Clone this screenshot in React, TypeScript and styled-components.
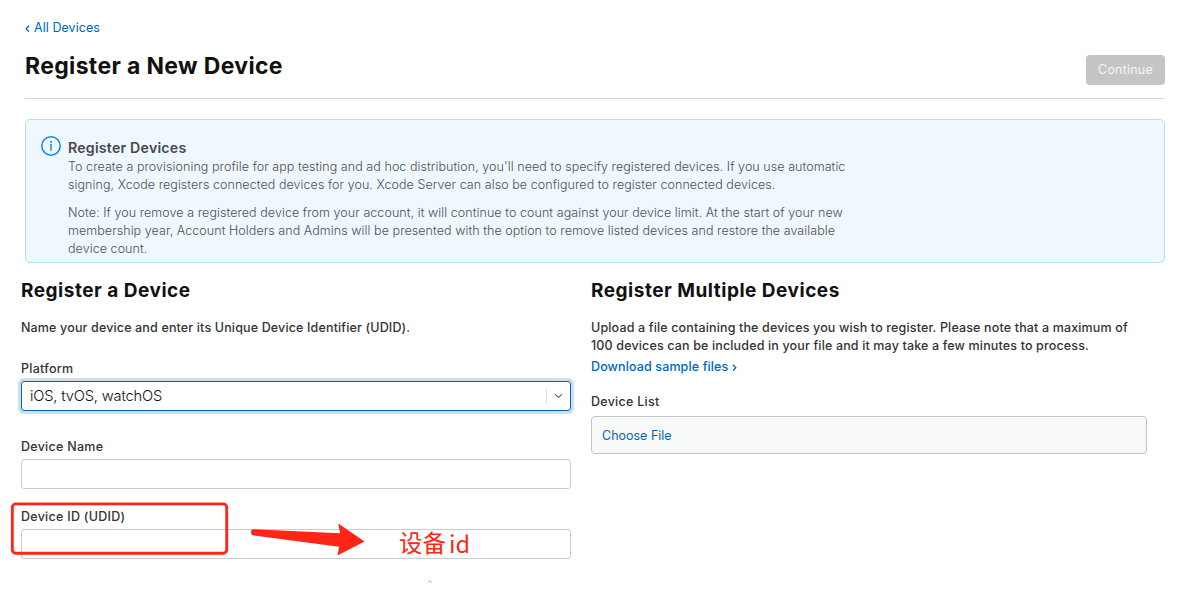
import React from "react";
import styled, { createGlobalStyle } from "styled-components";

const GlobalStyle = createGlobalStyle`
  * { box-sizing: border-box; }
  body {
    margin: 0;
    background: #fff;
    color: #333;
    font-family: Inter, "Noto Sans CJK SC", sans-serif;
    font-size: 12.5px;
    line-height: 18px;
    overflow: hidden;
  }
  h1, h2, h3, p { margin: 0; }
`;

const Page = styled.main`
  position: relative;
  width: 1202px;
  height: 599px;
  padding: 18px 37px 0 21px;
  background: #fff;
`;

const Header = styled.header`
  height: 81px;
  margin-left: 4px;
  display: flex;
  justify-content: space-between;
  border-bottom: 1px solid #d6d6d6;
`;

const Heading = styled.div`
  display: flex;
  flex-direction: column;
  align-items: flex-start;
`;

const BackLink = styled.a`
  display: flex;
  align-items: center;
  gap: 4px;
  height: 20px;
  color: #0066bd;
  letter-spacing: 0.05px;
`;

const Title = styled.h1`
  margin-top: 12px;
  color: #111;
  font-size: 23px;
  font-weight: 650;
  line-height: 32px;
  letter-spacing: 0.34px;
`;

const ContinueButton = styled.button`
  width: 79px;
  height: 30px;
  margin-top: 37px;
  padding: 0 0 1px;
  border: 0;
  border-radius: 4px;
  background: #c5c5c5;
  color: #f6f6f6;
  font: 400 12.5px/29px Inter, sans-serif;
  letter-spacing: 0.2px;
`;

const Notice = styled.section`
  display: flex;
  gap: 7px;
  height: 144px;
  margin: 20px 0 0 4px;
  padding: 16px 15px 0;
  border: 1px solid #b4dcfb;
  border-radius: 5px;
  background: #eff7ff;
`;

const NoticeBody = styled.div`
  padding-top: 3px;
  color: #505050;
  font-weight: 300;
  letter-spacing: 0.062px;
  white-space: nowrap;
`;

const NoticeTitle = styled.h3`
  color: #494949;
  font-size: 14.2px;
  font-weight: 600;
  line-height: 18px;
  letter-spacing: 0.2px;
`;

const NoticeText = styled.p<{ $spaced?: boolean }>`
  margin-top: ${(p) => (p.$spaced ? 10 : 1)}px;
`;

const Columns = styled.div`
  display: grid;
  grid-template-columns: 550px 556px;
  gap: 20px;
  padding-top: 15px;
`;

const Column = styled.section`
  display: flex;
  flex-direction: column;
`;

const SectionTitle = styled.h2`
  color: #111;
  font-size: 19px;
  font-weight: 650;
  line-height: 26px;
  letter-spacing: 0.51px;
`;

const Intro = styled.p`
  margin-top: 15px;
  font-weight: 500;
  letter-spacing: 0.15px;
  white-space: nowrap;
`;

const SampleLink = styled.a`
  display: flex;
  align-items: center;
  gap: 4px;
  margin-top: 3px;
  color: #0066bd;
  font-weight: 500;
  letter-spacing: 0.12px;
`;

const Field = styled.div<{ $top: number }>`
  display: flex;
  flex-direction: column;
  margin-top: ${(p) => p.$top}px;
`;

const Label = styled.label`
  font-weight: 480;
  line-height: 18px;
  letter-spacing: 0.27px;
`;

const TextInput = styled.input`
  width: 100%;
  height: 30px;
  margin-top: 3px;
  padding: 0 8px;
  border: 1px solid #ccc;
  border-radius: 3px;
  background: #fff;
`;

const Select = styled.div`
  display: flex;
  align-items: center;
  height: 30px;
  margin-top: 3px;
  border: 1px solid #0563b9;
  border-radius: 3px;
  box-shadow: 0 0 0 3px #cde0f2;
  color: #111;
  font-size: 14.7px;
  font-weight: 300;
  letter-spacing: -0.18px;
`;

const SelectValue = styled.span`
  flex: 1;
  padding-left: 8px;
`;

const SelectArrow = styled.span`
  display: flex;
  align-items: center;
  width: 24px;
  height: 16px;
  padding-left: 7px;
  border-left: 1px solid #ddd;
`;

const FilePicker = styled.div`
  display: flex;
  align-items: center;
  height: 38px;
  margin-top: 5px;
  padding: 2px 0 0 10px;
  border: 1px solid #c4c4c4;
  border-radius: 4px;
  background: #f7faf9;
  color: #0066bd;
`;

const Highlight = styled.svg`
  position: absolute;
  left: 10px;
  top: 501px;
`;

const Arrow = styled.svg`
  position: absolute;
  left: 248px;
  top: 520px;
`;

const Annotation = styled.div`
  position: absolute;
  left: 399px;
  top: 525px;
  display: flex;
  gap: 3px;
  color: #ff2617;
  font-family: "Noto Sans CJK SC", sans-serif;
  font-size: 23.5px;
  line-height: 34px;
`;

const Latin = styled.span`
  padding-top: 1px;
`;

const Speck = styled.svg`
  position: absolute;
  left: 427px;
  top: 579px;
`;

const Chevron = ({ d }: { d: string }) => (
  <svg width="5" height="8" viewBox="0 0 5 8" fill="none" stroke="currentColor" strokeWidth="1.3">
    <path d={d} />
  </svg>
);

export default function App() {
  return (
    <Page>
      <GlobalStyle />
      <Header>
        <Heading>
          <BackLink>
            <Chevron d="M4 1.7 1.2 4.7 4 7.7" />
            <span>All Devices</span>
          </BackLink>
          <Title>Register a New Device</Title>
        </Heading>
        <ContinueButton>Continue</ContinueButton>
      </Header>

      <Notice>
        <svg width="20" height="20" viewBox="0 0 20 20" fill="none">
          <circle cx="10" cy="10" r="9.2" stroke="#0a84ff" strokeWidth="1.5" />
          <path d="M10 8.2v6" stroke="#0a84ff" strokeWidth="1.4" strokeLinecap="round" />
          <circle cx="10" cy="5.7" r="0.95" fill="#0a84ff" />
        </svg>
        <NoticeBody>
          <NoticeTitle>Register Devices</NoticeTitle>
          <NoticeText>
            To create a provisioning profile for app testing and ad hoc distribution, you'll need to specify registered devices. If you use automatic
            <br />
            signing, Xcode registers connected devices for you. Xcode Server can also be configured to register connected devices.
          </NoticeText>
          <NoticeText $spaced>
            Note: If you remove a registered device from your account, it will continue to count against your device limit. At the start of your new
            <br />
            membership year, Account Holders and Admins will be presented with the option to remove listed devices and restore the available
            <br />
            device count.
          </NoticeText>
        </NoticeBody>
      </Notice>

      <Columns>
        <Column>
          <SectionTitle>Register a Device</SectionTitle>
          <Intro>Name your device and enter its Unique Device Identifier (UDID).</Intro>
          <Field $top={23}>
            <Label>Platform</Label>
            <Select>
              <SelectValue>iOS, tvOS, watchOS</SelectValue>
              <SelectArrow>
                <svg width="9" height="6" viewBox="0 0 9 6" fill="none" stroke="#666" strokeWidth="1.1">
                  <path d="M1 1.2 4.5 4.5 8 1.2" />
                </svg>
              </SelectArrow>
            </Select>
          </Field>
          <Field $top={27}>
            <Label>Device Name</Label>
            <TextInput />
          </Field>
          <Field $top={19}>
            <Label>Device ID (UDID)</Label>
            <TextInput />
          </Field>
        </Column>

        <Column>
          <SectionTitle>Register Multiple Devices</SectionTitle>
          <Intro>
            Upload a file containing the devices you wish to register. Please note that a maximum of
            <br />
            100 devices can be included in your file and it may take a few minutes to process.
          </Intro>
          <SampleLink>
            <span>Download sample files</span>
            <Chevron d="M1 1.7 3.8 4.7 1 7.7" />
          </SampleLink>
          <Field $top={17}>
            <Label>Device List</Label>
            <FilePicker>Choose File</FilePicker>
          </Field>
        </Column>
      </Columns>

      <Highlight width="220" height="56" viewBox="0 0 220 56" fill="none">
        <rect x="2.3" y="2.9" width="214.4" height="49.3" rx="3.5" stroke="#ff2617" strokeWidth="2.9" />
      </Highlight>
      <Arrow width="120" height="40" viewBox="0 0 120 40">
        <path d="M5 9.2 92 13.2 90.3 3.5 116.5 21.5 89.5 35.5 91 26.8 4.5 15.2Q3 14.5 3 12.2 3 9.2 5 9.2Z" fill="#ff2617" />
      </Arrow>
      <Annotation>
        <span>设备</span>
        <Latin>id</Latin>
      </Annotation>
      <Speck width="6" height="5" viewBox="0 0 6 5" fill="none">
        <path d="M1.5 3.5 3 1.7 4.5 3.5" stroke="#ff8f88" strokeWidth="1" />
      </Speck>
    </Page>
  );
}
